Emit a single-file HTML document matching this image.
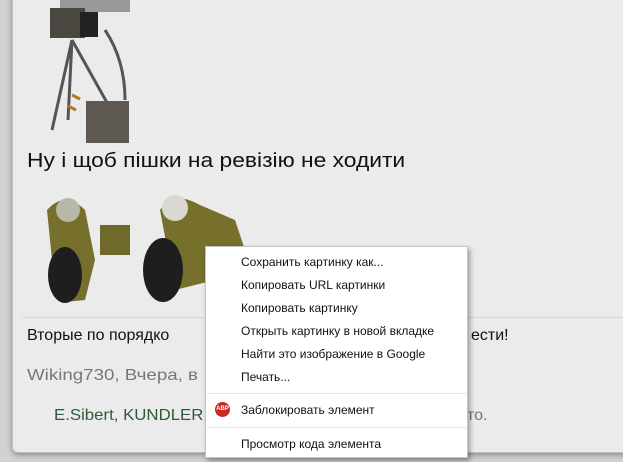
<!DOCTYPE html>
<html><head><meta charset="utf-8"><style>
html,body{margin:0;padding:0;width:623px;height:462px;overflow:hidden;background:#d2d2d2;font-family:"Liberation Sans","DejaVu Sans",sans-serif;}
.panel{position:absolute;left:12px;top:-10px;width:640px;height:461px;background:#ebebeb;border:1px solid #b8c4bc;border-radius:6px;box-shadow:0 2px 6px rgba(0,0,0,.35);}
.t{position:absolute;white-space:nowrap;transform-origin:0 0;}
.menu{position:absolute;left:205px;top:246px;width:261px;height:210px;background:#fff;border:1px solid #c4c4c4;box-shadow:2px 3px 5px rgba(0,0,0,.35);font-size:12px;color:#111;}
.mi{position:absolute;left:35px;white-space:nowrap;}
.sep{position:absolute;left:1px;right:1px;height:1px;background:#e3e3e3;}
</style></head><body>
<div class="panel"></div>
<svg style="position:absolute;left:40px;top:0" width="95" height="145">
<rect x="20" y="0" width="70" height="12" fill="#999"/>
<rect x="10" y="8" width="35" height="30" fill="#4a4640"/>
<rect x="40" y="12" width="18" height="25" fill="#222"/>
<path d="M32 40 L12 130 M32 40 L28 120 M32 40 L70 108 M65 30 Q85 60 85 100" stroke="#555" stroke-width="3" fill="none"/>
<rect x="46" y="101" width="43" height="42" fill="#5e5852"/>
<path d="M32 95 l8 4 M28 106 l8 4" stroke="#b07a20" stroke-width="3"/>
</svg>
<div class="t" style="left:27px;top:150px;font-size:20px;color:#111;transform:scaleX(1.14);">Ну і щоб пішки на ревізію не ходити</div>
<svg style="position:absolute;left:25px;top:180px" width="225" height="125">
<path d="M22 30 Q40 10 60 30 L70 80 L60 120 L40 122 L28 90 Z" fill="#77702c"/>
<ellipse cx="40" cy="95" rx="17" ry="28" fill="#1e1e1e"/>
<circle cx="43" cy="30" r="12" fill="#b8b8a8"/>
<rect x="75" y="45" width="30" height="30" fill="#6f6a2a"/>
<path d="M135 30 Q150 10 175 25 L210 40 L220 70 L190 100 L150 110 Z" fill="#77702c"/>
<ellipse cx="138" cy="90" rx="20" ry="32" fill="#1e1e1e"/>
<circle cx="150" cy="28" r="13" fill="#d8d8d0"/>
</svg>
<div style="position:absolute;left:22px;top:317px;width:601px;height:1px;background:#d6d6d6"></div>
<div class="t" style="left:27px;top:327px;font-size:16px;color:#111;">Вторые по порядко</div>
<div class="t" style="left:471px;top:327px;font-size:16px;color:#111;">ести!</div>
<div class="t" style="left:27px;top:367px;font-size:16px;color:#777;transform:scaleX(1.17);">Wiking730, Вчера, в</div>
<div class="t" style="left:54px;top:407px;font-size:16px;color:#2f5a38;transform:scaleX(1.05);">E.Sibert, KUNDLER</div>
<div class="t" style="left:467px;top:407px;font-size:16px;color:#777;">то.</div>
<div class="menu">
<div class="mi" style="top:8px">Сохранить картинку как...</div>
<div class="mi" style="top:31px">Копировать URL картинки</div>
<div class="mi" style="top:54px">Копировать картинку</div>
<div class="mi" style="top:77px">Открыть картинку в новой вкладке</div>
<div class="mi" style="top:100px">Найти это изображение в Google</div>
<div class="mi" style="top:123px">Печать...</div>
<div class="sep" style="top:146px"></div>
<div style="position:absolute;left:9px;top:155px;width:15px;height:15px;border-radius:50%;background:#c8281e;color:#fff;font-size:6px;font-weight:bold;line-height:15px;text-align:center;">ABP</div>
<div class="mi" style="top:156px">Заблокировать элемент</div>
<div class="sep" style="top:180px"></div>
<div class="mi" style="top:190px">Просмотр кода элемента</div>
</div>
</body></html>
